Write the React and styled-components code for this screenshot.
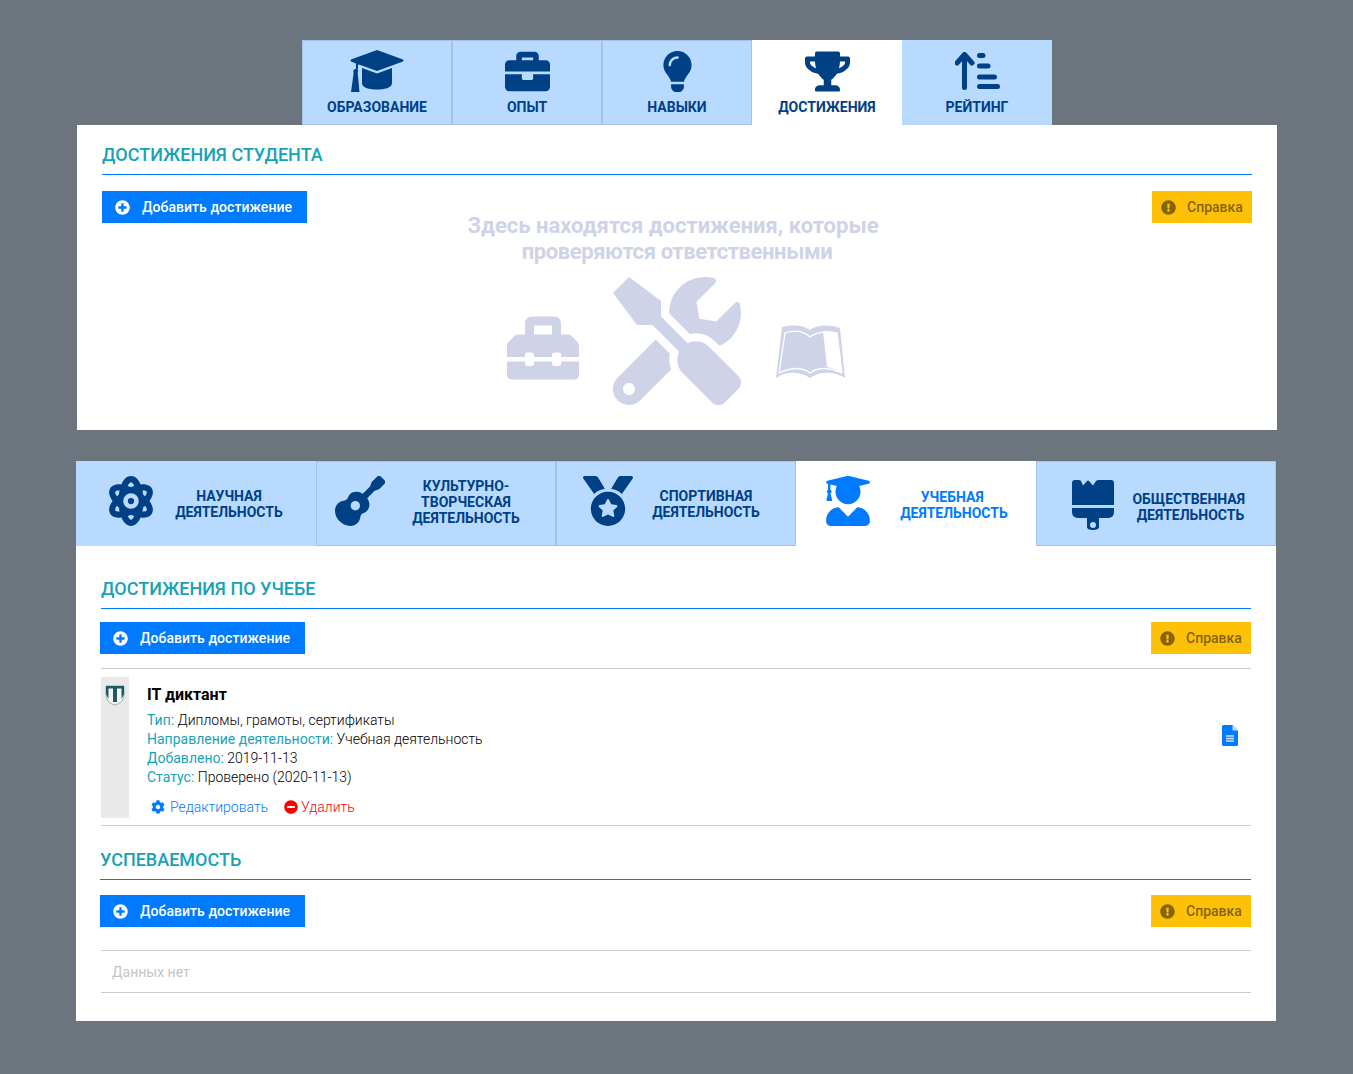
import styled, { createGlobalStyle } from 'styled-components';
import {
  FaBriefcase,
  FaLightbulb,
  FaTrophy,
  FaAtom,
  FaGuitar,
  FaMedal,
  FaUserGraduate,
  FaPlusCircle,
  FaExclamationCircle,
  FaCog,
  FaMinusCircle,
  FaToolbox,
  FaTools,
} from 'react-icons/fa';

const GlobalStyle = createGlobalStyle`
  html, body {
    margin: 0;
    padding: 0;
    background: #6c757d;
    font-family: Roboto, "Liberation Sans", sans-serif;
  }
  * { box-sizing: border-box; }
`;

const Page = styled.div`
  width: 1353px;
  height: 1074px;
  padding-top: 40px;
  overflow: hidden;
`;

const TopTabs = styled.div`
  display: flex;
  width: 750px;
  margin-left: 302px;
`;

const TopTab = styled.div`
  width: 150px;
  height: 85px;
  display: flex;
  flex-direction: column;
  align-items: center;
  padding-top: 9px;
  background: ${(p) => (p.$active ? '#fff' : '#b8daff')};
  box-shadow: ${(p) => (p.$active || p.$plain ? 'none' : 'inset 0 0 0 1px #a3c2e4')};
  color: #004085;
  font-size: 14px;
  font-weight: 700;
  line-height: 16px;
`;

const TopIconSlot = styled.div`
  height: 44px;
  margin-bottom: 6px;
  display: flex;
  align-items: center;
  justify-content: center;
  svg { display: block; }
`;

const Card = styled.section`
  width: 1200px;
  background: #fff;
  margin-left: ${(p) => p.$left}px;
`;

const TopCard = styled(Card)`
  height: 305px;
  padding: 19px 25px 0;
`;

const SectionTitle = styled.h2`
  margin: 0;
  height: 31px;
  font-size: 18px;
  font-weight: 500;
  line-height: 22px;
  color: #17a2b8;
  border-bottom: 1px solid #007bff;
`;

const Actions = styled.div`
  display: flex;
  justify-content: space-between;
  margin-top: 16px;
`;

const ActionButton = styled.button`
  display: flex;
  align-items: center;
  height: 32px;
  width: ${(p) => (p.$help ? '100px' : '205px')};
  padding: 0 0 0 ${(p) => (p.$help ? '9px' : '13px')};
  border: 0;
  background: ${(p) => (p.$help ? '#ffc107' : '#007bff')};
  color: ${(p) => (p.$help ? '#856404' : '#fff')};
  font-family: inherit;
  font-size: 14px;
  font-weight: 500;
  letter-spacing: ${(p) => (p.$help ? '0' : '0.05px')};
  svg { width: 15px; height: 15px; margin-right: ${(p) => (p.$help ? '11px' : '12px')}; }
`;

const EmptyState = styled.div`
  margin-top: -10px;
  display: flex;
  flex-direction: column;
  align-items: center;
  color: #cfd3e8;
`;

const EmptyTitle = styled.div`
  text-align: center;
  font-size: 22px;
  font-weight: 700;
  line-height: 26px;
  white-space: nowrap;
`;

const EmptyLine = styled.div`
  margin-right: ${(p) => (p.$first ? '8px' : '0')};
  letter-spacing: ${(p) => (p.$first ? '0' : '-0.4px')};
`;

const EmptyIcons = styled.div`
  display: flex;
  align-items: flex-start;
  margin-top: 12px;
  padding-right: 2px;
  svg { display: block; }
`;

const ToolboxIcon = styled(FaToolbox)`
  width: 72px;
  height: 72px;
  margin: 35px 34px 0 0;
`;

const ToolsIcon = styled(FaTools)`
  width: 128px;
  height: 128px;
  margin-right: 35px;
`;

const BookGlyph = styled.svg`
  width: 69px;
  height: 54px;
  margin-top: 48px;
`;

const SecondBlock = styled.div`
  margin-top: 31px;
`;

const SubTabs = styled.div`
  display: flex;
  width: 1200px;
  margin-left: 76px;
`;

const SubTab = styled.div`
  width: 240px;
  height: 85px;
  display: grid;
  grid-template-columns: 74px 1fr;
  align-items: center;
  justify-items: center;
  padding: 0 ${(p) => p.$right}px 0 ${(p) => p.$left}px;
  background: ${(p) => (p.$active ? '#fff' : '#b8daff')};
  box-shadow: ${(p) => (p.$active || p.$plain ? 'none' : 'inset 0 0 0 1px #a3c2e4')};
  color: ${(p) => (p.$active ? '#007bff' : '#004085')};
  font-size: 14px;
  font-weight: 700;
  line-height: 16px;
  text-align: center;
  svg { display: block; height: 50px; width: ${(p) => (p.$narrow ? '42px' : '50px')}; margin-top: ${(p) => (p.$narrow ? '3px' : '-6px')}; }
`;

const SubTabText = styled.div`
  margin-top: ${(p) => p.$shift}px;
`;

const BottomCard = styled(Card)`
  height: 475px;
  padding: 32px 25px 0;
`;

const BottomActions = styled(Actions)`
  margin: 13px 0 0 -1px;
`;

const ItemRow = styled.div`
  margin-top: 14px;
  border-top: 1px solid #ccc;
  border-bottom: 1px solid #ccc;
  height: 158px;
  padding-top: 8px;
  display: flex;
`;

const LogoStrip = styled.div`
  width: 28px;
  height: 141px;
  background: #e9e9e9;
  padding: 8px 0 0 4px;
  svg { display: block; width: 20px; height: 21px; }
`;

const ItemBody = styled.div`
  flex: 1;
  padding-left: 18px;
`;

const ItemTitle = styled.div`
  margin-top: 9px;
  font-size: 16px;
  font-weight: 700;
  line-height: 18px;
  color: #000;
`;

const Fields = styled.div`
  margin-top: 7px;
  font-size: 14px;
  font-weight: 300;
  line-height: 19px;
  color: #000;
`;

const FieldLabel = styled.span`
  color: #17a2b8;
  font-weight: 400;
`;

const ItemLinks = styled.div`
  display: flex;
  align-items: center;
  margin-top: 12px;
  margin-left: 4px;
  font-size: 14px;
  font-weight: 300;
`;

const ItemLink = styled.a`
  display: flex;
  align-items: center;
  color: ${(p) => (p.$danger ? '#ff0000' : '#007bff')};
  margin-right: 16px;
  svg { width: 14px; height: 14px; margin-right: ${(p) => (p.$danger ? '3px' : '5px')}; }
`;

const DocCell = styled.div`
  padding: 48px 13px 0 0;
  svg { display: block; width: 16px; height: 21px; }
`;

const SecondTitle = styled(SectionTitle)`
  margin: 23px 0 0 -1px;
`;

const SecondActions = styled(Actions)`
  margin: 15px 0 0 -1px;
`;

const NoData = styled.div`
  margin-top: 23px;
  height: 43px;
  border-top: 1px solid #ccc;
  border-bottom: 1px solid #ccc;
  padding-left: 11px;
  font-size: 14px;
  font-weight: 400;
  line-height: 42px;
  color: #c4c4c4;
`;

const CapIcon = () => (
  <svg width="54" height="43" viewBox="0 0 54 43" fill="currentColor">
    <path d="M27 0 L53 9.5 Q54 10.5 53 11.5 L27 21 L9 14.5 L8 15 V19.5 L6 19.5 V13.5 L1 11.5 Q0 10.5 1 9.5 Z" />
    <path d="M12 18 L27 23.5 L42 18 V33 C42 38 34 39.5 27 39.5 C20 39.5 12 38 12 33 Z" />
    <path d="M5.5 19 C8 19 8.5 21 7.7 23 L9.5 42 L1 42 Q2.5 32 3.6 23 C3 21 3.5 19 5.5 19 Z" />
  </svg>
);

const RankIcon = () => (
  <svg width="45" height="38" viewBox="0 0 45 38" fill="none" stroke="currentColor" strokeLinecap="round">
    <path d="M9.5 35.5 V3 M2 11 L9.5 2.5 L17 11" strokeWidth="5" strokeLinejoin="round" />
    <path d="M24.5 3.5 H28 M24.5 14 H33 M24.5 25 H39.5 M24.5 34.5 H42.5" strokeWidth="5" />
  </svg>
);

const BrushIcon = () => (
  <svg viewBox="0 0 42 50" fill="currentColor">
    <path d="M0 3 Q0 0 3 0 H7 Q9 0 9.5 2 L11 5.5 L15 1 Q16 0 17 1 L21 5.5 L24 1 Q25 0 27 0 H39 Q42 0 42 3 V25 H0 Z" />
    <path d="M0 28 H42 V32 Q42 38 35 38 H27 V47 Q27 50 21 50 Q15 50 15 47 V38 H7 Q0 38 0 32 Z M21 42 A3 3 0 1 0 21 48 A3 3 0 1 0 21 42 Z" fillRule="evenodd" />
  </svg>
);

const BookIcon = () => (
  <BookGlyph viewBox="0 0 69 54">
    <path
      d="M6 2 C12 0 26 -1 34 5 C42 -1 56 0 64 3 L69 53 C58 46 44 46 34 53 C24 46 10 46 0 53 Z"
      fill="currentColor"
    />
    <path d="M47 6 Q55 6 61 8 L66 48 Q58 43 51 42 Z" fill="#fff" />
    <path
      d="M9 8 Q24 3 34 12 Q42 5 61 8 L66 48 Q46 39 34 48 Q22 39 3 48 Z"
      fill="none"
      stroke="#fff"
      strokeWidth="1.3"
    />
  </BookGlyph>
);

const ShieldLogo = () => (
  <svg viewBox="0 0 20 21" fill="none">
    <path d="M1 1 H19 V10 C19 15 15 19 10 20 C5 19 1 15 1 10 Z" fill="#f4f7f7" stroke="#8fb0b5" strokeWidth="1" />
    <path d="M1 1 H19 V9 L16.5 14 V3.5 H12 V17 H8 V3.5 H3.5 V14 L1 9 Z" fill="#1d5a66" />
  </svg>
);

const DocIcon = () => (
  <svg viewBox="0 0 16 21">
    <path d="M1.5 0 H10.5 L16 5.5 V19.5 Q16 21 14.5 21 H1.5 Q0 21 0 19.5 V1.5 Q0 0 1.5 0 Z" fill="#007bff" />
    <path d="M10.5 0 L16 5.5 H10.5 Z" fill="#b8daff" />
    <path d="M4 11 H12 M4 13.5 H12 M4 16 H12" stroke="#cfe4ff" strokeWidth="1.4" />
  </svg>
);

const topTabs = [
  { label: 'ОБРАЗОВАНИЕ', icon: <CapIcon /> },
  { label: 'ОПЫТ', icon: <FaBriefcase size={45} /> },
  { label: 'НАВЫКИ', icon: <FaLightbulb size={41} /> },
  { label: 'ДОСТИЖЕНИЯ', icon: <FaTrophy size={45} />, active: true },
  { label: 'РЕЙТИНГ', icon: <RankIcon />, plain: true },
];

const subTabs = [
  { lines: ['НАУЧНАЯ', 'ДЕЯТЕЛЬНОСТЬ'], icon: <FaAtom />, left: 18, right: 26, shift: 1, plain: true },
  { lines: ['КУЛЬТУРНО-', 'ТВОРЧЕСКАЯ', 'ДЕЯТЕЛЬНОСТЬ'], icon: <FaGuitar />, left: 7, right: 21, shift: -4 },
  { lines: ['СПОРТИВНАЯ', 'ДЕЯТЕЛЬНОСТЬ'], icon: <FaMedal />, left: 15, right: 29, shift: 1 },
  { lines: ['УЧЕБНАЯ\u00a0', 'ДЕЯТЕЛЬНОСТЬ'], icon: <FaUserGraduate />, left: 15, right: 13, shift: 3, active: true },
  { lines: ['ОБЩЕСТВЕННАЯ\u00a0', 'ДЕЯТЕЛЬНОСТЬ'], icon: <BrushIcon />, left: 20, right: 25, shift: 7, narrow: true },
];

const fields = [
  ['Тип:', 'Дипломы, грамоты, сертификаты'],
  ['Направление деятельности:', 'Учебная деятельность'],
  ['Добавлено:', '2019-11-13'],
  ['Статус:', 'Проверено (2020-11-13)'],
];

const AddRow = ({ as: Row = Actions }) => (
  <Row>
    <ActionButton>
      <FaPlusCircle />
      Добавить достижение
    </ActionButton>
    <ActionButton $help>
      <FaExclamationCircle />
      Справка
    </ActionButton>
  </Row>
);

export default function App() {
  return (
    <Page>
      <GlobalStyle />
      <TopTabs>
        {topTabs.map(({ label, icon, active, plain }) => (
          <TopTab key={label} $active={active} $plain={plain}>
            <TopIconSlot>{icon}</TopIconSlot>
            <span>{label}</span>
          </TopTab>
        ))}
      </TopTabs>
      <TopCard $left={77}>
        <SectionTitle>ДОСТИЖЕНИЯ СТУДЕНТА</SectionTitle>
        <AddRow />
        <EmptyState>
          <EmptyTitle>
            <EmptyLine $first>Здесь находятся достижения, которые</EmptyLine>
            <EmptyLine>проверяются ответственными</EmptyLine>
          </EmptyTitle>
          <EmptyIcons>
            <ToolboxIcon />
            <ToolsIcon />
            <BookIcon />
          </EmptyIcons>
        </EmptyState>
      </TopCard>

      <SecondBlock>
        <SubTabs>
          {subTabs.map(({ lines, icon, left, right, shift, active, plain, narrow }) => (
            <SubTab key={lines[0]} $left={left} $right={right} $active={active} $plain={plain} $narrow={narrow}>
              {icon}
              <SubTabText $shift={shift}>
                {lines.map((line) => (
                  <div key={line}>{line}</div>
                ))}
              </SubTabText>
            </SubTab>
          ))}
        </SubTabs>
        <BottomCard $left={76}>
          <SectionTitle>ДОСТИЖЕНИЯ ПО УЧЕБЕ</SectionTitle>
          <AddRow as={BottomActions} />
          <ItemRow>
            <LogoStrip>
              <ShieldLogo />
            </LogoStrip>
            <ItemBody>
              <ItemTitle>IT диктант</ItemTitle>
              <Fields>
                {fields.map(([name, value]) => (
                  <div key={name}>
                    <FieldLabel>{name}</FieldLabel> {value}
                  </div>
                ))}
              </Fields>
              <ItemLinks>
                <ItemLink>
                  <FaCog />
                  Редактировать
                </ItemLink>
                <ItemLink $danger>
                  <FaMinusCircle />
                  Удалить
                </ItemLink>
              </ItemLinks>
            </ItemBody>
            <DocCell>
              <DocIcon />
            </DocCell>
          </ItemRow>
          <SecondTitle>УСПЕВАЕМОСТЬ</SecondTitle>
          <AddRow as={SecondActions} />
          <NoData>Данных нет</NoData>
        </BottomCard>
      </SecondBlock>
    </Page>
  );
}
